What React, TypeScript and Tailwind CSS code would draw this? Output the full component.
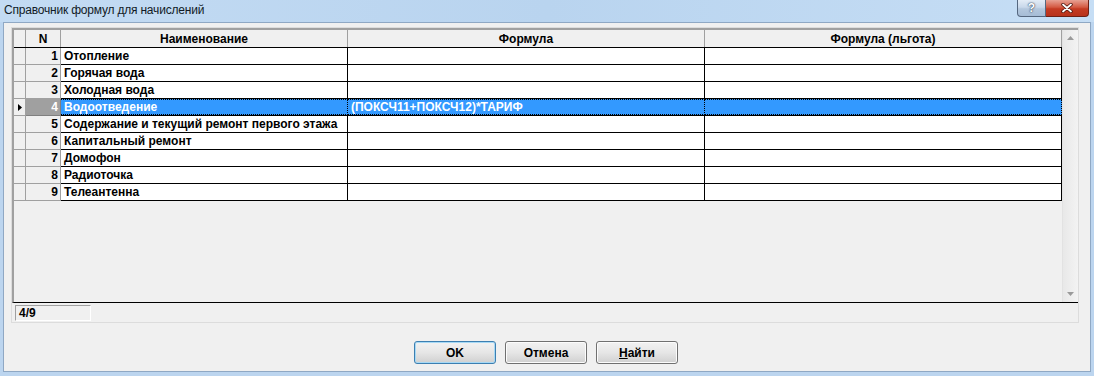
import React from "react";

const ROWS = [
  { n: 1, name: "Отопление", formula: "", lgota: "" },
  { n: 2, name: "Горячая вода", formula: "", lgota: "" },
  { n: 3, name: "Холодная вода", formula: "", lgota: "" },
  { n: 4, name: "Водоотведение", formula: "(ПОКСЧ11+ПОКСЧ12)*ТАРИФ", lgota: "" },
  { n: 5, name: "Содержание и текущий ремонт первого этажа", formula: "", lgota: "" },
  { n: 6, name: "Капитальный ремонт", formula: "", lgota: "" },
  { n: 7, name: "Домофон", formula: "", lgota: "" },
  { n: 8, name: "Радиоточка", formula: "", lgota: "" },
  { n: 9, name: "Телеантенна", formula: "", lgota: "" },
];

const SELECTED = 4;

function CaptionButtons() {
  return (
    <div className="flex items-start pr-[5px]">
      <div className="w-[29px] h-[17px] rounded-bl-[4px] border border-t-0 border-[#55677f] bg-[linear-gradient(#e3ecf6,#c9d8ea_45%,#b3c7dd_55%,#a6bcd6)] flex items-center justify-center text-[12px] font-bold text-white [text-shadow:0_0_2px_#2c3d55,0_0_1px_#2c3d55] leading-none">
        ?
      </div>
      <div className="w-[43px] h-[17px] rounded-br-[4px] border border-t-0 border-l-0 border-[#6e2015] bg-[linear-gradient(#e7a193,#d45a43_45%,#c43b23_55%,#b8321c)] flex items-center justify-center">
        <svg width="12" height="10" viewBox="0 0 12 10">
          <path d="M2 1.5 L10 8.5 M10 1.5 L2 8.5" stroke="#4a140c" strokeWidth="3.4" strokeLinecap="round" />
          <path d="M2 1.5 L10 8.5 M10 1.5 L2 8.5" stroke="#ffffff" strokeWidth="1.8" strokeLinecap="round" />
        </svg>
      </div>
    </div>
  );
}

function HeaderCell({ w, children }: { w: string; children?: React.ReactNode }) {
  return (
    <div className={`${w} h-full shrink-0 border-r border-[#a0a0a0] bg-[#f0f0f0] flex items-center justify-center`}>
      {children}
    </div>
  );
}

function Row({ r }: { r: (typeof ROWS)[number] }) {
  const sel = r.n === SELECTED;
  const data = sel
    ? "bg-[#3399ff] text-white border-y border-dotted border-[#c87a3a]"
    : "bg-white text-black";
  return (
    <div className="flex h-[17px]">
      <div className="w-[12px] shrink-0 border-r border-b border-[#a0a0a0] bg-[#f0f0f0] flex items-center justify-center">
        {sel && (
          <svg width="4" height="7" viewBox="0 0 4 7">
            <path d="M0 0 L4 3.5 L0 7 Z" fill="#000" />
          </svg>
        )}
      </div>
      <div
        className={`w-[35px] shrink-0 border-r border-b flex items-center justify-end pr-[2px] ${
          sel ? "bg-[#a0a0a0] text-white border-[#808080]" : "bg-[#f0f0f0] text-black border-[#a0a0a0]"
        }`}
      >
        {r.n}
      </div>
      <div className="flex flex-1 border-b border-black">
        <div className={`w-[287px] shrink-0 border-r border-black pl-[3px] flex items-center whitespace-nowrap ${data}`}>{r.name}</div>
        <div className={`w-[357px] shrink-0 border-r border-black pl-[3px] flex items-center ${data}`}>{r.formula}</div>
        <div className={`w-[357px] shrink-0 border-r border-black pl-[3px] flex items-center ${data}`}>{r.lgota}</div>
      </div>
    </div>
  );
}

function WinButton({ children, def }: { children: React.ReactNode; def?: boolean }) {
  return (
    <button
      className={`h-[23px] w-[82px] rounded-[3px] border text-[12px] font-bold text-black bg-gradient-to-b from-[#f2f2f2] via-[#e6e6e6] to-[#d0d0d0] ${
        def ? "border-[#3c7fb1] shadow-[inset_0_0_0_1px_#a7d9f5]" : "border-[#707070] shadow-[inset_0_0_0_1px_#fcfcfc]"
      }`}
    >
      {children}
    </button>
  );
}

export default function App() {
  return (
    <div className="w-[1094px] h-[376px] flex flex-col bg-[#bcd5ef] font-['Liberation_Sans',Arial,sans-serif] overflow-hidden">
      {/* Заголовок окна */}
      <div className="h-[22px] shrink-0 flex items-start justify-between bg-gradient-to-r from-[#c3dbf3] via-[#b9d4ef] to-[#c6def5]">
        <div className="pl-[4px] pt-[3px] text-[12px] tracking-[-0.2px] text-[#111a26] leading-[15px]">
          Справочник формул для начислений
        </div>
        <CaptionButtons />
      </div>

      {/* Клиентская область */}
      <div className="flex-1 flex flex-col mx-[3px] mb-[4px] bg-[#f0f0f0] border border-[#8fa8c4] pt-[4px] pl-[7px] pr-[11px]">
        <div className="h-[296px] flex flex-col border border-[#dcdcdc] text-[12px] font-bold leading-none">
          {/* Сетка */}
          <div className="h-[276px] flex border-t-2 border-l-2 border-[#a0a0a0] border-b border-b-black">
            <div className="flex-1 flex flex-col">
              <div className="h-[18px] flex border-b border-black">
                <HeaderCell w="w-[12px]" />
                <HeaderCell w="w-[35px]">N</HeaderCell>
                <HeaderCell w="w-[287px]">Наименование</HeaderCell>
                <HeaderCell w="w-[357px]">Формула</HeaderCell>
                <HeaderCell w="w-[357px]">Формула (льгота)</HeaderCell>
              </div>
              {ROWS.map((r) => (
                <Row key={r.n} r={r} />
              ))}
              <div className="flex-1 bg-[#f0f0f0]" />
            </div>
            {/* Полоса прокрутки */}
            <div className="w-[16px] shrink-0 flex flex-col justify-between items-center bg-gradient-to-r from-[#e8e8e8] to-[#f3f3f3] border-l border-[#e2e2e2] py-[6px]">
              <svg width="7" height="4" viewBox="0 0 7 4">
                <path d="M0 4 L3.5 0 L7 4 Z" fill="#9a9a9a" />
              </svg>
              <svg width="7" height="4" viewBox="0 0 7 4">
                <path d="M0 0 L3.5 4 L7 0 Z" fill="#9a9a9a" />
              </svg>
            </div>
          </div>
          {/* Строка состояния */}
          <div className="h-[19px] flex items-center pl-[3px]">
            <div className="w-[76px] h-[16px] border border-[#a0a0a0] border-r-white border-b-white pl-[3px] flex items-center text-[12px]">
              4/9
            </div>
          </div>
        </div>

        {/* Кнопки */}
        <div className="flex justify-center gap-[9px] pt-[18px] pl-[2px]">
          <WinButton def>OK</WinButton>
          <WinButton>Отмена</WinButton>
          <WinButton>
            <span className="underline">Н</span>айти
          </WinButton>
        </div>
      </div>
    </div>
  );
}
